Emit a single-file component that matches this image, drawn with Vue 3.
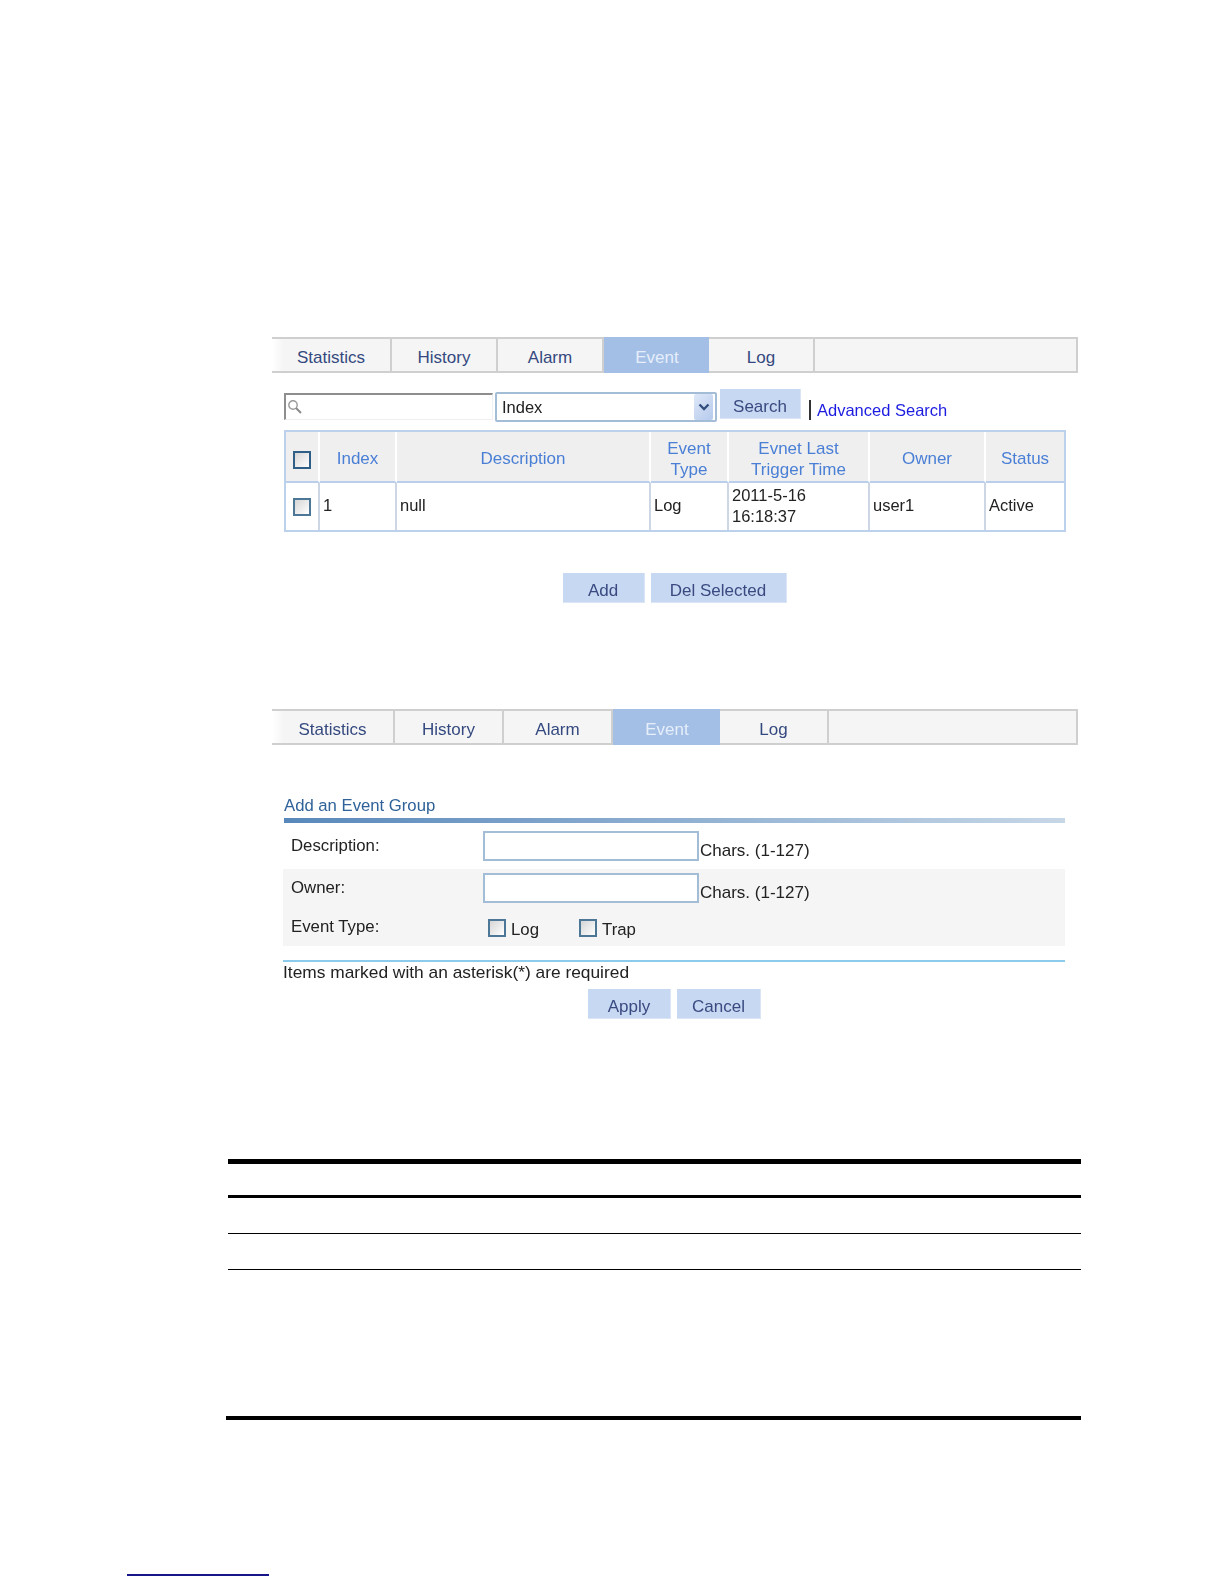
<template>
  <div class="page">
    <section class="panel first">
      <div class="tabs">
        <div
          v-for="tab in listTabs"
          :key="tab.name"
          class="tab"
          :class="{ active: tab.name === 'Event' }"
          :style="{ width: tab.width + 'px' }"
        >{{ tab.name }}</div>
        <div class="tab filler"></div>
      </div>

      <div class="toolbar">
        <div class="search-box">
          <svg class="search-icon" width="18" height="18" viewBox="0 0 18 18">
            <circle cx="7" cy="7" r="4.2" fill="none" stroke="#9a9a9a" stroke-width="1.4" />
            <path d="M10 10l5 5" stroke="#8a8a8a" stroke-width="2" />
          </svg>
        </div>
        <div class="select-box">
          <span>Index</span>
          <span class="select-arrow">
            <svg width="12" height="8" viewBox="0 0 12 8">
              <path d="M1.5 1.5L6 6l4.5-4.5" fill="none" stroke="#34507f" stroke-width="2.4" />
            </svg>
          </span>
        </div>
        <button class="btn search-btn">Search</button>
        <span class="divider"></span>
        <a class="adv-link">Advanced Search</a>
      </div>

      <table class="grid">
        <colgroup>
          <col v-for="(w, i) in colWidths" :key="i" :style="{ width: w + 'px' }" />
        </colgroup>
        <thead>
          <tr>
            <th><span class="check"></span></th>
            <th>Index</th>
            <th>Description</th>
            <th>Event<br />Type</th>
            <th>Evnet Last<br />Trigger Time</th>
            <th>Owner</th>
            <th>Status</th>
          </tr>
        </thead>
        <tbody>
          <tr>
            <td class="check-cell"><span class="check muted"></span></td>
            <td>1</td>
            <td>null</td>
            <td>Log</td>
            <td>2011-5-16<br />16:18:37</td>
            <td>user1</td>
            <td>Active</td>
          </tr>
        </tbody>
      </table>

      <div class="actions list-actions">
        <button class="btn add-btn">Add</button>
        <button class="btn del-btn">Del Selected</button>
      </div>
    </section>

    <section class="panel second">
      <div class="tabs">
        <div
          v-for="tab in formTabs"
          :key="tab.name"
          class="tab"
          :class="{ active: tab.name === 'Event' }"
          :style="{ width: tab.width + 'px' }"
        >{{ tab.name }}</div>
        <div class="tab filler"></div>
      </div>

      <div class="form">
        <h3 class="form-title">Add an Event Group</h3>
        <div class="form-row">
          <label class="form-label">Description:</label>
          <input class="text-input" type="text" />
          <span class="hint">Chars. (1-127)</span>
        </div>
        <div class="shaded">
          <div class="form-row">
            <label class="form-label">Owner:</label>
            <input class="text-input" type="text" />
            <span class="hint">Chars. (1-127)</span>
          </div>
          <div class="form-row type-row">
            <label class="form-label">Event Type:</label>
            <span class="check-item log-item"><span class="check muted"></span>Log</span>
            <span class="check-item"><span class="check muted"></span>Trap</span>
          </div>
        </div>
        <div class="form-foot">Items marked with an asterisk(*) are required</div>
        <div class="actions form-actions">
          <button class="btn apply-btn">Apply</button>
          <button class="btn cancel-btn">Cancel</button>
        </div>
      </div>
    </section>

    <div class="spec">
      <div class="spec-head"></div>
      <div class="spec-row"></div>
      <div class="spec-row"></div>
      <div class="spec-tail"></div>
    </div>

    <div class="footnote"></div>
  </div>
</template>

<script setup>
const listTabs = [
  { name: 'Statistics', width: 120 },
  { name: 'History', width: 106 },
  { name: 'Alarm', width: 106 },
  { name: 'Event', width: 105 },
  { name: 'Log', width: 106 }
]

const formTabs = [
  { name: 'Statistics', width: 123 },
  { name: 'History', width: 109 },
  { name: 'Alarm', width: 109 },
  { name: 'Event', width: 107 },
  { name: 'Log', width: 109 }
]

const colWidths = [34, 77, 254, 78, 141, 116, 78]
</script>

<style>
body {
  margin: 0;
  background: #fff;
}
</style>

<style scoped>
.page {
  width: 1224px;
  height: 1584px;
  overflow: hidden;
  background: #fff;
  font-family: "Liberation Sans", Arial, sans-serif;
  font-size: 16.5px;
  color: #222;
}

.panel {
  margin-left: 272px;
  width: 806px;
  filter: blur(0.35px);
}

.first {
  padding-top: 337px;
}

.second {
  margin-top: 106px;
}

.tabs {
  display: flex;
  height: 36px;
  box-sizing: border-box;
  border-top: 2px solid #cfcfcf;
  border-bottom: 2px solid #cfcfcf;
  background: linear-gradient(90deg, #fff, #f5f5f5 12px);
}

.tab {
  display: flex;
  align-items: center;
  justify-content: center;
  padding-top: 6px;
  box-sizing: border-box;
  border-right: 2px solid #cfcfcf;
  color: #34497f;
  font-size: 17px;
}

.tab.active {
  margin: -2px 0;
  padding-left: 3px;
  background: #a3bfe6;
  border-right-color: #a3bfe6;
  color: #e6eefa;
}

.tab.filler {
  flex: 1;
  border-right: 2px solid #cfcfcf;
}

.toolbar {
  display: flex;
  align-items: flex-start;
  height: 41px;
  margin-top: 16px;
  margin-left: 12px;
}

.search-box {
  width: 209px;
  height: 27px;
  margin-top: 4px;
  box-sizing: border-box;
  border-top: 2px solid #8e8e8e;
  border-left: 2px solid #8e8e8e;
  border-right: 1px solid #f0f0f0;
  border-bottom: 1px solid #f0f0f0;
}

.search-icon {
  display: block;
  margin-top: 3px;
}

.select-box {
  display: flex;
  align-items: center;
  justify-content: space-between;
  width: 222px;
  height: 30px;
  margin-top: 3px;
  margin-left: 2px;
  padding-left: 5px;
  box-sizing: border-box;
  border: 2px solid #a3bdd6;
  border-radius: 2px;
}

.select-arrow {
  display: flex;
  align-items: center;
  justify-content: center;
  width: 19px;
  height: 26px;
  margin-right: 2px;
  border-radius: 2px;
  background: linear-gradient(135deg, #dfe8f8, #b5caec);
}

.btn {
  height: 30px;
  padding: 6px 0 0;
  box-sizing: border-box;
  border: none;
  border-right: 1px solid #dbe5f5;
  border-bottom: 1px solid #dbe5f5;
  background: #c6d8f2;
  color: #3a4a80;
  font-family: inherit;
  font-size: 17px;
}

.search-btn {
  width: 81px;
  margin-left: 3px;
}

.divider {
  width: 2px;
  height: 20px;
  margin-top: 11px;
  margin-left: 8px;
  background: #333;
}

.adv-link {
  margin-top: 11px;
  margin-left: 6px;
  line-height: 20px;
  color: #1c1ce0;
}

.grid {
  width: 782px;
  margin-left: 12px;
  table-layout: fixed;
  border-collapse: separate;
  border-spacing: 0;
  border: 2px solid #bcd1ec;
}

.grid th {
  height: 45px;
  padding: 4px 0 0;
  background: #efefef;
  border-right: 2px solid #fff;
  border-bottom: 2px solid #b9cfeb;
  color: #4a7fd6;
  font-size: 17px;
  font-weight: normal;
  line-height: 21px;
  text-align: center;
}

.grid td {
  height: 45px;
  padding: 0 0 2px 3px;
  border-right: 2px solid #ccd6e4;
  line-height: 21px;
}

.grid th:last-child,
.grid td:last-child {
  border-right: none;
}

.grid td.check-cell {
  padding: 0 0 2px;
  text-align: center;
}

.check {
  display: inline-block;
  width: 18px;
  height: 18px;
  box-sizing: border-box;
  border: 2px solid #2f5f86;
  background: linear-gradient(135deg, #d6d6d6, #fff);
  vertical-align: middle;
}

.check.muted {
  border-color: #4d7797;
}

.actions {
  display: flex;
  justify-content: center;
  gap: 6px;
}

.list-actions {
  width: 805px;
  margin-top: 41px;
}

.add-btn {
  width: 82px;
}

.del-btn {
  width: 136px;
}

.form {
  margin-left: 11px;
  width: 782px;
}

.form-title {
  margin: 0;
  padding-top: 49px;
  padding-left: 1px;
  line-height: 24px;
  color: #2f6299;
  font-size: 16.7px;
  font-weight: normal;
}

.form-title::after {
  content: "";
  display: block;
  height: 5px;
  background: linear-gradient(90deg, #5888bb, #c6d7e7);
}

.form-row {
  display: flex;
  align-items: center;
  height: 46px;
  padding-left: 8px;
  box-sizing: border-box;
  font-size: 16.8px;
}

.form-label {
  width: 192px;
  flex: none;
}

.text-input {
  width: 216px;
  height: 30px;
  margin: 0;
  padding: 0;
  box-sizing: border-box;
  border: 2px solid #a3bdd6;
  background: #fff;
}

.hint {
  margin-top: 9px;
  margin-left: 1px;
  font-size: 17px;
}

.shaded {
  background: #f5f5f5;
  height: 77px;
}

.shaded .form-row {
  height: 38px;
}

.shaded .type-row {
  height: 39px;
}

.check-item {
  display: inline-flex;
  align-items: center;
  gap: 5px;
  margin-top: 7px;
}

.check-item .check {
  margin-top: -5px;
}

.log-item {
  width: 91px;
  margin-left: 5px;
}

.form-foot {
  margin-top: 14px;
  border-top: 2px solid #8ccbec;
  font-size: 17.35px;
  line-height: 21px;
}

.form-actions {
  width: 782px;
  margin-top: 6px;
  padding-left: 1px;
  box-sizing: border-box;
}

.apply-btn {
  width: 83px;
}

.cancel-btn {
  width: 84px;
}

.spec {
  margin-top: 140px;
  margin-left: 228px;
  width: 853px;
}

.spec-head {
  height: 31px;
  border-top: 5px solid #000;
  border-bottom: 3px solid #000;
}

.spec-row {
  height: 35px;
  border-bottom: 1.5px solid #000;
}

.spec-tail {
  height: 146px;
  margin-left: -2px;
  border-bottom: 4px solid #000;
}

.footnote {
  margin-top: 154px;
  margin-left: 127px;
  width: 142px;
  height: 1.5px;
  background: #16168a;
}
</style>
